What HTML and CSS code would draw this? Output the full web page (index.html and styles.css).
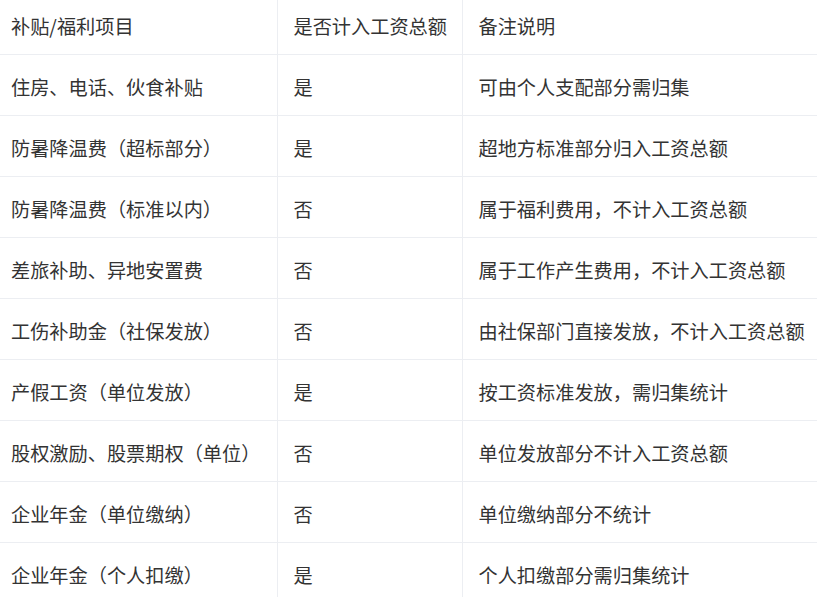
FILE: index.html
```html
<!DOCTYPE html>
<html lang="zh">
<head>
<meta charset="utf-8">
<link rel="stylesheet" href="styles.css">
</head>
<body>
<table class="grid">
  <colgroup>
    <col class="c1"><col class="c2"><col class="c3">
  </colgroup>
  <thead>
    <tr><th>补贴/福利项目</th><th>是否计入工资总额</th><th>备注说明</th></tr>
  </thead>
  <tbody>
    <tr><td>住房、电话、伙食补贴</td><td>是</td><td>可由个人支配部分需归集</td></tr>
    <tr><td>防暑降温费（超标部分）</td><td>是</td><td>超地方标准部分归入工资总额</td></tr>
    <tr><td>防暑降温费（标准以内）</td><td>否</td><td>属于福利费用，不计入工资总额</td></tr>
    <tr><td>差旅补助、异地安置费</td><td>否</td><td>属于工作产生费用，不计入工资总额</td></tr>
    <tr><td>工伤补助金（社保发放）</td><td>否</td><td>由社保部门直接发放，不计入工资总额</td></tr>
    <tr><td>产假工资（单位发放）</td><td>是</td><td>按工资标准发放，需归集统计</td></tr>
    <tr><td>股权激励、股票期权（单位）</td><td>否</td><td>单位发放部分不计入工资总额</td></tr>
    <tr><td>企业年金（单位缴纳）</td><td>否</td><td>单位缴纳部分不统计</td></tr>
    <tr><td>企业年金（个人扣缴）</td><td>是</td><td>个人扣缴部分需归集统计</td></tr>
  </tbody>
</table>
</body>
</html>
```
FILE: styles.css
```css
html, body {
  margin: 0;
  padding: 0;
  background: #ffffff;
}
body {
  font-family: "Noto Sans CJK SC", "Noto Sans", sans-serif;
  font-size: 19.2px;
  color: #333333;
  overflow: hidden;
}
.grid {
  border-collapse: collapse;
  table-layout: fixed;
  width: 850px;
}
.c1 { width: 277px; }
.c2 { width: 185px; }
.c3 { width: 388px; }
.grid th, .grid td {
  font-weight: normal;
  text-align: left;
  padding: 0 16px;
  line-height: 28px;
  white-space: nowrap;
  border-bottom: 1px solid #eceef2;
  border-right: 1px solid #eceef2;
  vertical-align: middle;
}
.grid th:first-child, .grid td:first-child {
  padding-left: 11px;
}
.grid th {
  height: 52px;
  padding-bottom: 2px;
}
.grid td {
  height: 57px;
  padding-top: 3px;
}
```
